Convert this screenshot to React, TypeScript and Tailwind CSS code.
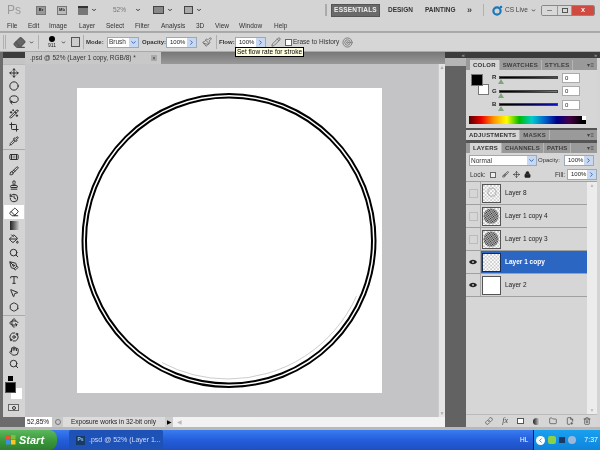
import {
  Move, Circle, Lasso, Wand2, Crop, Pipette, Bandage, Brush, Stamp, History, Eraser, PaintBucket, PenTool, Type,
  MousePointer2, Hexagon, Rotate3d, Orbit, Hand, Search, Link, Lock, Paintbrush, ChevronDown, ChevronRight, Minus, Trash2, Folder, FilePlus2, Pencil, Target,
} from "lucide-react";

const menus = [
  ["File", 7, 14], ["Edit", 28, 14], ["Image", 49, 21], ["Layer", 79, 19], ["Select", 106, 21], ["Filter", 135, 18],
  ["Analysis", 161, 29], ["3D", 196, 11], ["View", 215, 16], ["Window", 239, 27], ["Help", 274, 16],
] as const;

const toolGroups = [
  [Move, Circle, Lasso, Wand2, Crop, Pipette],
  [Bandage, Brush, Stamp, History, Eraser, null, PaintBucket, Search, PenTool, Type, MousePointer2, Hexagon],
  [Rotate3d, Orbit, Hand, Search],
];

function Input({ value, w }: { value: string; w: string }) {
  return (
    <div className={`flex h-[11px] shrink-0 ${w} border border-[#9ab] bg-white`}>
      <span className="flex-1 pl-[3px] text-[6px] leading-[9px] text-[#222]">{value}</span>
      <span className="flex w-[9px] items-center justify-center bg-[#c8d8f0]">
        <ChevronRight size={7} strokeWidth={3} className="text-[#2a5db0]" />
      </span>
    </div>
  );
}

function Thumb({ kind, selected }: { kind: "check" | "ring" | "noise" | "white"; selected?: boolean }) {
  return (
    <svg width="19" height="19" viewBox="0 0 19 19" className={`shrink-0 border ${selected ? "border-[#1c2c50]" : "border-[#555]"} bg-white`}>
      <defs>
        <pattern id={`chk-${kind}`} width="4" height="4" patternUnits="userSpaceOnUse">
          <rect width="4" height="4" fill="#fff" />
          <rect width="2" height="2" fill="#ccc" />
          <rect x="2" y="2" width="2" height="2" fill="#ccc" />
        </pattern>
        <pattern id="dots" width="1.8" height="1.8" patternUnits="userSpaceOnUse" patternTransform="rotate(30)">
          <rect width="1.8" height="1.8" fill="#bbb" />
          <rect width="1.1" height="1.1" fill="#222" />
        </pattern>
      </defs>
      {kind !== "white" && <rect width="19" height="19" fill={`url(#chk-${kind})`} />}
      {kind === "ring" && <circle cx="10" cy="8" r="4.5" fill="none" stroke="#999" strokeWidth="0.8" />}
      {kind === "noise" && <circle cx="9" cy="9" r="8.5" fill="url(#dots)" />}
    </svg>
  );
}

function Eye() {
  return (
    <svg width="8" height="6" viewBox="0 0 8 6">
      <path d="M0 3 C2 0 6 0 8 3 C6 6 2 6 0 3Z" fill="#222" />
      <circle cx="4" cy="3" r="1" fill="#bbb" />
    </svg>
  );
}

function LayerRow({ name, kind, visible, active }: { name: string; kind: "check" | "ring" | "noise" | "white"; visible?: boolean; active?: boolean }) {
  return (
    <div className="flex h-[23px] border-b border-[#a0a0a0]">
      <div className="flex w-[15px] shrink-0 items-center justify-center border-r border-[#a8a8a8] bg-[#d6d6d6]">
        {visible ? <Eye /> : <div className="h-[9px] w-[9px] border border-[#bcbcbc]" />}
      </div>
      <div className={`flex flex-1 items-center gap-[4px] pl-[1px] ${active ? "bg-[#2c66c3]" : ""}`}>
        <Thumb kind={kind} selected={active} />
        <span className={`text-[6.5px] ${active ? "font-bold text-white" : "text-[#222]"}`}>{name}</span>
      </div>
    </div>
  );
}

function PanelTabs({ tabs, activeOnly }: { tabs: string[]; activeOnly?: boolean }) {
  return (
    <div className="flex h-[10px] items-stretch bg-[#9a9a9a]">
      {tabs.map((t, i) => (
        <div
          key={t}
          className={`flex items-center border-r border-[#b5b5b5] px-[3px] text-[6px] font-bold tracking-[0.2px] ${
            i === 0 ? "bg-[#d6d6d6] text-[#333]" : "text-[#3c3c3c]"
          } ${i === 0 && !activeOnly ? "ml-[4px]" : ""}`}
        >
          {t}
        </div>
      ))}
      <div className="ml-auto flex items-center pr-[3px] text-[6px] text-[#444]">▾≡</div>
    </div>
  );
}

function Slider({ label, bar }: { label: string; bar: string }) {
  return (
    <div className="flex h-[13.5px] items-center pl-[26px]">
      <span className="w-[7px] text-[6px] font-bold text-[#222]">{label}</span>
      <div className="relative h-[3px] w-[59px] border border-[#444]">
        <div className={`h-full ${bar}`} />
        <div className="absolute left-[-2px] top-[2px] h-0 w-0 border-x-[3px] border-b-[5px] border-x-transparent border-b-[#7fa37f]" />
      </div>
      <div className="ml-[4px] h-[10px] w-[18px] border border-[#aaa] bg-white pl-[2px] text-[6px] leading-[9px] text-[#222]">0</div>
    </div>
  );
}

export default function App() {
  return (
    <div className="flex h-[450px] w-[600px] flex-col overflow-hidden bg-[#d4d4d4] font-['Liberation_Sans',sans-serif] text-[#333] blur-[0.3px]">
      {/* app bar */}
      <div className="flex h-[20px] shrink-0 items-center">
        <span className="ml-[7px] w-[29px] text-[12px] text-[#9a9a9a]">Ps</span>
        <div className="flex h-[9px] w-[10px] items-center justify-center border border-[#777] bg-[#999] text-[4px] font-bold text-[#222]">Br</div>
        <div className="ml-[11px] flex h-[9px] w-[10px] items-center justify-center border border-[#777] bg-[#bbb] text-[4px] font-bold text-[#222]">Mb</div>
        <div className="ml-[11px] h-[9px] w-[10px] border-t-2 border-[#333] bg-[#777]" />
        <ChevronDown size={6} strokeWidth={4} className="ml-[3px] text-[#333]" />
        <span className="ml-[16px] w-[17px] text-[6.5px] text-[#777]">52%</span>
        <ChevronDown size={6} strokeWidth={4} className="ml-[5px] text-[#333]" />
        <div className="ml-[12px] h-[8px] w-[11px] border border-[#444] bg-[#888]" />
        <ChevronDown size={6} strokeWidth={4} className="ml-[3px] text-[#333]" />
        <div className="ml-[11px] h-[8px] w-[9px] border border-[#444] bg-[#aaa]" />
        <ChevronDown size={6} strokeWidth={4} className="ml-[3px] text-[#333]" />
        <div className="ml-[123px] h-[12px] w-[2px] bg-[#aaa]" />
        <div className="ml-[4px] flex h-[13px] w-[49px] items-center justify-center border border-[#555] bg-[#6a6a6a] text-[6.5px] font-bold tracking-[0.2px] text-[#eee]">ESSENTIALS</div>
        <span className="ml-[8px] w-[37px] text-[6.5px] font-bold text-[#333]">DESIGN</span>
        <span className="w-[42px] text-[6.5px] font-bold text-[#333]">PAINTING</span>
        <span className="w-[16px] text-[9px] font-bold leading-none text-[#444]">»</span>
        <div className="h-[12px] w-[1px] bg-[#b0b0b0]" />
        <svg width="11" height="11" viewBox="0 0 11 11" className="ml-[8px] shrink-0">
          <circle cx="5" cy="6" r="3.6" fill="none" stroke="#1b78b8" strokeWidth="2.2" />
          <circle cx="9" cy="2" r="1.3" fill="#1b78b8" />
        </svg>
        <span className="ml-[2px] w-[26px] whitespace-nowrap text-[6.5px] text-[#444]">CS Live</span>
        <ChevronDown size={5} strokeWidth={4} className="shrink-0 text-[#333]" />
        <div className="ml-[5px] flex h-[11px] w-[54px] shrink-0 overflow-hidden rounded-[2px] border border-[#888]">
          <div className="flex w-[15px] items-center justify-center bg-[#d8d8d8]"><Minus size={7} className="text-[#444]" /></div>
          <div className="flex w-[15px] items-center justify-center border-x border-[#999] bg-[#d8d8d8]"><div className="h-[5px] w-[6px] border border-[#555]" /></div>
          <div className="flex flex-1 items-center justify-center bg-[#cf4a40] text-[6px] font-bold text-white">X</div>
        </div>
      </div>

      {/* menu bar */}
      <div className="flex h-[12px] shrink-0 items-center border-b border-[#a8a8a8] text-[6.5px] text-[#333]">
        {menus.map(([m, , w], i) => (
          <span key={m} className={i === 0 ? "ml-[7px]" : ""} style={{ width: w, marginRight: i < menus.length - 1 ? menus[i + 1][1] - menus[i][1] - w : 0 }}>{m}</span>
        ))}
      </div>

      {/* options bar */}
      <div className="relative flex h-[20px] shrink-0 items-center border-y border-[#aaa] bg-[#d6d6d6] text-[6.5px] text-[#333]">
        <div className="ml-[3px] h-[14px] w-[3px] border-x border-[#b0b0b0]" />
        <Eraser size={13} fill="#666" className="ml-[7px] text-[#555]" />
        <ChevronDown size={5} strokeWidth={4} className="ml-[3px] text-[#333]" />
        <div className="ml-[4px] h-[14px] w-[1px] bg-[#b0b0b0]" />
        <div className="ml-[7px] flex w-[12px] flex-col items-center">
          <div className="h-[6px] w-[6px] rounded-full bg-black" />
          <span className="text-[5px] leading-[7px] text-[#222]">911</span>
        </div>
        <ChevronDown size={5} strokeWidth={4} className="ml-[3px] text-[#333]" />
        <div className="ml-[5px] h-[10px] w-[9px] border border-[#555] bg-[#ccc]" />
        <div className="ml-[3px] h-[14px] w-[1px] bg-[#b0b0b0]" />
        <span className="ml-[2px] w-[21px] text-[6px] font-bold">Mode:</span>
        <div className="flex h-[11px] w-[32px] items-center justify-between border border-[#9ab] bg-white pl-[1px]">
          <span className="text-[6.5px]">Brush</span>
          <span className="flex h-full w-[9px] items-center justify-center bg-[#c8d8f0]"><ChevronDown size={7} strokeWidth={3} className="text-[#2a5db0]" /></span>
        </div>
        <span className="ml-[3px] w-[24px] text-[6px] font-bold">Opacity:</span>
        <Input value="100%" w="w-[31px]" />
        <Paintbrush size={10} className="ml-[5px] text-[#666]" />
        <div className="ml-[4px] h-[14px] w-[1px] bg-[#b0b0b0]" />
        <span className="ml-[2px] w-[16px] text-[6px] font-bold">Flow:</span>
        <Input value="100%" w="w-[31px]" />
        <Pencil size={10} className="ml-[5px] text-[#666]" />
        <div className="ml-[4px] h-[7px] w-[7px] border border-[#666] bg-white" />
        <span className="ml-[1px] w-[49px] text-[6.5px]">Erase to History</span>
        <Target size={11} className="text-[#777]" />
        {/* tooltip */}
        <div className="absolute left-[235px] top-[14px] z-10 h-[10px] w-[69px] border border-black bg-[#ffffe1] pl-[1px] text-[6.5px] leading-[8px] text-black">Set flow rate for stroke</div>
      </div>

      {/* main */}
      <div className="flex h-[375px] shrink-0">
        {/* tools */}
        <div className="flex w-[25px] shrink-0 flex-col border-l-[3px] border-[#6c6c6c] bg-[#d4d4d4]">
          <div className="h-[6px] bg-[#3c3c3c]" />
          <div className="h-[7px] border-b border-[#bbb] bg-[#c4c4c4]" />
          {toolGroups.map((group, g) => (
            <div key={g} className={`flex flex-col items-center ${g > 0 ? "mt-[1px] border-t border-[#aaa] pt-[1px]" : "pt-[1px]"}`}>
              {group.map((Icon, i) => {
                const selected = Icon === Eraser;
                return (
                  <div key={i} className={`flex h-[13.6px] w-[20px] items-center justify-center ${selected ? "bg-white" : ""}`}>
                    {Icon ? (
                      <Icon size={10} strokeWidth={2.4} className="text-[#2e2e2e]" />
                    ) : (
                      <div className="h-[9px] w-[9px] bg-gradient-to-r from-[#222] to-[#ccc]" />
                    )}
                  </div>
                );
              })}
            </div>
          ))}
          <div className="ml-[5px] mt-[5px] h-[5px] w-[5px] bg-black" />
          <div className="relative ml-[2px] mt-[1px] h-[18px] w-[18px]">
            <div className="absolute left-[6px] top-[6px] h-[11px] w-[11px] bg-white" />
            <div className="absolute left-0 top-0 h-[11px] w-[11px] border border-[#555] bg-black" />
          </div>
          <div className="ml-[5px] mt-[4px] flex h-[7px] w-[11px] items-center justify-center border border-[#666] bg-[#ddd]">
            <div className="h-[4px] w-[4px] rounded-full border border-[#333]" />
          </div>
          <div className="mt-auto h-[10px] bg-[#6c6c6c]" />
        </div>

        {/* document */}
        <div className="flex w-[420px] shrink-0 flex-col">
          <div className="flex h-[12px] shrink-0 bg-gradient-to-b from-[#777] to-[#999]">
            <div className="flex w-[136px] items-center justify-between bg-[#c8c8c8] pl-[5px] pr-[4px] text-[6.5px] text-[#333]">
              <span>.psd @ 52% (Layer 1 copy, RGB/8) *</span>
              <span className="flex h-[6px] w-[6px] items-center justify-center bg-[#aaa] text-[5px] leading-none">×</span>
            </div>
          </div>
          <div className="flex flex-1">
            <div className="flex-1 bg-[#c4c3c5] pl-[52px] pt-[24px]">
              <div className="h-[305px] w-[305px] bg-white">
                <svg width="305" height="305" viewBox="0 0 305 305">
                  <circle cx="152" cy="152.5" r="146.5" fill="none" stroke="#000" strokeWidth="2" />
                  <circle cx="152" cy="152.5" r="143" fill="none" stroke="#000" strokeWidth="2" />
                  <circle cx="151" cy="150" r="141" fill="none" stroke="#aaa" strokeWidth="0.6" strokeDasharray="230 700" strokeDashoffset="-60" />
                </svg>
              </div>
            </div>
            <div className="flex w-[7px] flex-col justify-between border-l border-[#ccc] bg-[#e4e4e4] text-center text-[5px] text-[#aaa]">
              <span>▲</span>
              <span>▼</span>
            </div>
          </div>
          <div className="flex h-[10px] shrink-0 items-center bg-[#f2f2f2] text-[6.5px] text-[#222]">
            <span className="w-[27px] bg-white pl-[2px] leading-[10px]">52,85%</span>
            <div className="flex h-full w-[11px] items-center justify-center bg-[#c8c8c8]"><div className="h-[6px] w-[6px] rounded-full border border-[#777]" /></div>
            <span className="h-full w-[102px] bg-[#dcdcdc] pl-[8px] leading-[10px]">Exposure works in 32-bit only</span>
            <span className="flex h-full w-[8px] items-center justify-center bg-[#ccc] text-[6px] text-black">▶</span>
            <span className="pl-[4px] text-[6px] text-[#bbb]">◀</span>
          </div>
        </div>

        {/* dock + panels */}
        <div className="flex flex-1 flex-col">
          <div className="flex h-[6px] shrink-0 items-center justify-between bg-[#3c3c3c] px-[10px] text-[5px] leading-none text-[#bbb]">
            <span className="ml-[7px]">«</span>
            <span className="mr-[-7px]">»</span>
          </div>
          <div className="flex min-h-0 flex-1">
            <div className="flex w-[21px] shrink-0 flex-col bg-[#626262]">
              <div className="h-[8px] bg-[#b5b5b5]" />
            </div>
            <div className="flex w-[131px] shrink-0 flex-col bg-[#d6d6d6]">
              <div className="h-[2px] bg-[#9a9a9a]" />
              <PanelTabs tabs={["COLOR", "SWATCHES", "STYLES"]} />
              <div className="relative h-[58px] pt-[1px]">
                <div className="absolute left-[12px] top-[14px] h-[11px] w-[11px] border border-[#777] bg-white" />
                <div className="absolute left-[5px] top-[4px] h-[12px] w-[12px] border border-[#777] bg-black" />
                <Slider label="R" bar="bg-gradient-to-r from-black to-[#d01818]" />
                <Slider label="G" bar="bg-gradient-to-r from-black to-[#20c020]" />
                <Slider label="B" bar="bg-gradient-to-r from-black to-[#1010c0]" />
                <div className="ml-[3px] mt-[4px] flex h-[8px] w-[117px]">
                  <div className="flex-1 bg-[linear-gradient(to_right,#500,#e00,#f90,#ff0,#0b0,#0cc,#06c,#008,#404,#000)]" />
                  <div className="flex w-[4px] flex-col"><div className="h-1/2 bg-white" /><div className="h-1/2 bg-black" /></div>
                </div>
              </div>
              <div className="h-[2px] bg-[#555]" />
              <PanelTabs tabs={["ADJUSTMENTS", "MASKS"]} activeOnly />
              <div className="h-[3px] bg-[#555]" />
              <PanelTabs tabs={["LAYERS", "CHANNELS", "PATHS"]} />
              <div className="flex h-[15px] items-center gap-[1px] pl-[3px] text-[6.5px]">
                <div className="flex h-[11px] w-[68px] items-center justify-between border border-[#9ab] bg-white pl-[1px]">
                  <span>Normal</span>
                  <span className="flex h-full w-[9px] items-center justify-center bg-[#c8d8f0]"><ChevronDown size={7} strokeWidth={3} className="text-[#2a5db0]" /></span>
                </div>
                <span className="w-[25px] text-[6px]">Opacity:</span>
                <Input value="100%" w="w-[30px]" />
              </div>
              <div className="flex h-[14px] items-center border-b border-[#a0a0a0] pl-[4px] text-[6.5px]">
                <span className="w-[20px]">Lock:</span>
                <div className="h-[6px] w-[6px] border border-[#666] bg-[#eee]" />
                <Brush size={7} className="ml-[6px] text-[#222]" />
                <Move size={7} className="ml-[4px] text-[#222]" />
                <Lock size={7} fill="#222" className="ml-[4px] text-[#222]" />
                <span className="ml-[24px] w-[12px]">Fill:</span>
                <Input value="100%" w="w-[30px]" />
              </div>
              <div className="flex min-h-0 flex-1">
                <div className="flex-1">
                  <LayerRow name="Layer 8" kind="ring" />
                  <LayerRow name="Layer 1 copy 4" kind="noise" />
                  <LayerRow name="Layer 1 copy 3" kind="noise" />
                  <LayerRow name="Layer 1 copy" kind="check" visible active />
                  <LayerRow name="Layer 2" kind="white" visible />
                </div>
                <div className="flex w-[10px] flex-col justify-between bg-[#ececec] text-center text-[5px] text-[#bbb]">
                  <span>▲</span>
                  <span>▼</span>
                </div>
              </div>
              <div className="flex h-[13px] shrink-0 items-center justify-end gap-[9px] border-t border-[#bbb] pr-[6px] text-[#444]">
                <Link size={8} />
                <span className="font-['Liberation_Serif',serif] text-[8px] italic leading-none">fx</span>
                <div className="h-[6px] w-[7px] border border-[#555] bg-white" />
                <div className="h-[7px] w-[7px] rounded-full bg-gradient-to-r from-[#222] to-[#eee]" />
                <Folder size={8} />
                <FilePlus2 size={8} />
                <Trash2 size={8} />
              </div>
            </div>
          </div>
        </div>
      </div>

      {/* gap above taskbar */}
      <div className="h-[3px] shrink-0 bg-[#b8b8b8]" />

      {/* taskbar */}
      <div className="flex min-h-0 flex-1 items-stretch bg-gradient-to-b from-[#3a7cf0] via-[#245edb] to-[#1d4fc2] text-white">
        <div className="flex w-[57px] items-center gap-[3px] rounded-r-[8px] bg-gradient-to-b from-[#5cb85c] via-[#3c9a3c] to-[#2f7f2f] pl-[6px]">
          <svg width="10" height="10" viewBox="0 0 10 10">
            <rect width="4.5" height="4.5" fill="#e8542c" />
            <rect x="5" width="4.5" height="4.5" fill="#7cc040" />
            <rect y="5" width="4.5" height="4.5" fill="#3c8ee8" />
            <rect x="5" y="5" width="4.5" height="4.5" fill="#f8c820" />
          </svg>
          <span className="text-[11px] font-bold italic">Start</span>
        </div>
        <div className="ml-[12px] flex w-[94px] items-center gap-[4px] rounded-[2px] bg-[#1e52b7] pl-[7px] text-[7px]">
          <div className="flex h-[9px] w-[9px] items-center justify-center bg-[#1a3a66] text-[5px] font-bold text-[#8cc8f0]">Ps</div>
          <span className="text-[#cfdcf5]">.psd @ 52% (Layer 1...</span>
        </div>
        <span className="ml-[357px] self-center text-[6.5px]">HL</span>
        <div className="ml-[5px] flex flex-1 items-center gap-[3px] border-l border-[#123] bg-gradient-to-b from-[#1aa0f0] to-[#0f84dc] pl-[2px]">
          <div className="flex h-[9px] w-[9px] items-center justify-center rounded-full bg-white text-[#2a6cd0]"><ChevronRight size={7} strokeWidth={3} className="rotate-180" /></div>
          <div className="h-[8px] w-[8px] rounded-[2px] bg-[#8cd048]" />
          <div className="h-[6px] w-[6px] bg-[#1a3a66]" />
          <div className="h-[8px] w-[8px] rounded-full bg-[#9ab8d8]" />
          <span className="ml-[5px] text-[7px]">7:37</span>
        </div>
      </div>
    </div>
  );
}
